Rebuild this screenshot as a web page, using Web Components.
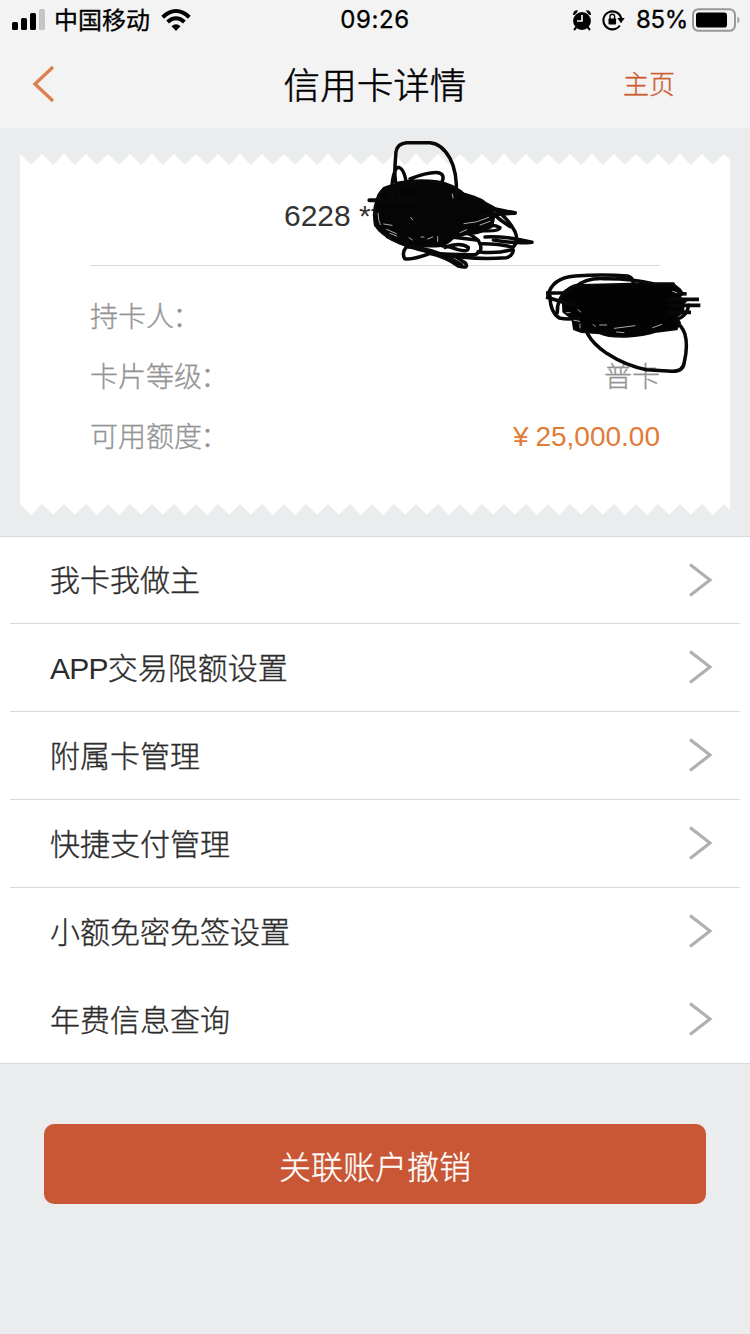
<!DOCTYPE html>
<html lang="zh-CN">
<head>
<meta charset="utf-8">
<title>信用卡详情</title>
<style>
html,body{margin:0;height:100%}
body{background:#ebeced;font-family:"Liberation Sans","Noto Sans CJK SC",sans-serif;color:#333;overflow:hidden}
</style>
</head>
<body>
<card-detail-page></card-detail-page>
<script>
function define(name, html) {
  const t = document.createElement('template');
  t.innerHTML = html;
  customElements.define(name, class extends HTMLElement {
    constructor() {
      super();
      this.attachShadow({ mode: 'open' }).append(t.content.cloneNode(true));
    }
  });
}

define('status-bar', `
<style>
:host{display:grid;grid-template-columns:1fr auto 1fr;align-items:center;height:40px;font:400 24px/40px Inter,"Noto Sans CJK SC",sans-serif;color:#000}
.l,.r{display:flex;align-items:center;height:40px}
.l{padding-left:12px}
.r{justify-content:flex-end;padding-right:10px}
svg{display:block;flex:none}
.time{letter-spacing:.6px;-webkit-text-stroke:.3px}
.carrier{margin:0 11px 0 9px;line-height:38px;-webkit-text-stroke:.3px;padding-top:2px}
.pct{margin:0 4px 0 11px;letter-spacing:-.3px;-webkit-text-stroke:.3px}
</style>
<div class="l">
<svg width="33" height="22" viewBox="0 0 33 22"><rect y="13" width="6" height="8" rx="1.6"/><rect x="9" y="9" width="6" height="12" rx="1.6"/><rect x="18" y="4" width="6" height="17" rx="1.6"/><rect x="27" width="6" height="21" rx="1.6" fill="#c5c5c5"/></svg>
<span class="carrier">中国移动</span>
<svg width="30" height="22" viewBox="0 0 30 22"><g fill="none" stroke="#000" stroke-width="4"><path d="M1.7 8.2Q8 2 15 2T28.300 8.200"/><path d="M6.600 13Q10.500 9.300 15 9.300T23.400 13"/></g><path d="M10.500 17.300Q15 13.200 19.500 17.300L15 22Z"/></svg>
</div>
<span class="time">09:26</span>
<div class="r">
<svg width="20" height="22" viewBox="0 0 20 22"><circle cx="10" cy="12" r="8.900"/><path d="M1 6Q1 1 6 1.300L5 3.500 2.500 6ZM19 6Q19 1 14 1.300L15 3.500 17.500 6Z"/><path d="M4.500 18 2 21M15.500 18 18 21" stroke="#000" stroke-width="2"/><path d="M10 6V12H5" fill="none" stroke="#f3f3f3" stroke-width="1.700"/></svg>
<svg style="margin-left:10px" width="23" height="22" viewBox="0 0 23 22"><path d="M17.800 16.500A9 9 0 1 1 19.200 9.500" fill="none" stroke="#000" stroke-width="2.100"/><path d="M15.300 9H22.700L19 14.200Z"/><rect x="6.500" y="9.500" width="7.600" height="6" rx=".8"/><path d="M8 10V7.600a2.300 2.300 0 0 1 4.600 0V10" fill="none" stroke="#000" stroke-width="1.400"/></svg>
<span class="pct">85%</span>
<svg width="48" height="24" viewBox="0 0 48 24"><rect x="1" y="1.200" width="42" height="21.600" rx="5.500" fill="none" stroke="#999" stroke-width="2"/><rect x="4" y="4.500" width="31" height="15" rx="2.800"/><path d="M45.500 8.500q2 .8 2 3.500t-2 3.500z" fill="#999"/></svg>
</div>`);

define('nav-header', `
<style>
:host{display:grid;grid-template-columns:1fr auto 1fr;align-items:center;height:88px}
.back{margin-left:32px;display:block}
h1{margin:0;padding-top:5px;font-weight:300;font-size:36.600px;line-height:83px;color:#000;-webkit-text-stroke:.5px}
.home{justify-self:end;margin-right:75px;padding-bottom:3px;font-size:26px;font-weight:300;color:#cd5c30;-webkit-text-stroke:.3px}
</style>
<svg class="back" width="24" height="40" viewBox="0 0 24 40"><path d="M21 3 3 20 21 37" fill="none" stroke="#dc8050" stroke-width="3.400"/></svg>
<h1><slot></slot></h1>
<span class="home"><slot name="action"></slot></span>`);

define('zigzag-edge', `
<style>
:host{display:block;height:11px}
:host([bottom]) .top,:host(:not([bottom])) .bot{display:none}
svg{display:block}
</style>
<svg width="710" height="11"><defs>
<pattern id="a" width="22" height="11" patternUnits="userSpaceOnUse"><path d="M0 0 11 11 22 0V11H0Z" fill="#fff"/></pattern>
<pattern id="b" width="22" height="11" patternUnits="userSpaceOnUse"><path d="M0 0 11 11 22 0Z" fill="#fff"/></pattern></defs>
<rect class="top" width="710" height="11" fill="url(#a)"/><rect class="bot" width="710" height="11" fill="url(#b)"/></svg>`);

define('info-row', `
<style>
:host{display:flex;justify-content:space-between;align-items:center;height:60px;font-size:28px;font-weight:300;color:#949494;-webkit-text-stroke:.3px}
.k,.v{padding-bottom:2px}
.v{color:var(--value,#949494);-webkit-text-stroke:var(--stroke,.3px);padding-bottom:var(--drop,2px);padding-top:var(--rise,0)}
</style>
<span class="k"><slot></slot></span><span class="v"><slot name="value"></slot></span>`);

define('card-summary', `
<style>
:host{display:block;position:relative;margin:26px 20px 0;height:361px}
.body{background:#fff;height:339px;padding:0 70px;box-sizing:border-box}
.no{height:101px;box-sizing:border-box;border-bottom:1px solid #d9d9d9;padding-left:194px;line-height:101px;font-size:30px;color:#333}
.rows{padding-top:20px}
.ink{position:absolute;left:-20px;top:-154px;pointer-events:none}
</style>
<zigzag-edge></zigzag-edge>
<div class="body"><div class="no"><slot name="number"></slot></div><div class="rows"><slot></slot></div></div>
<zigzag-edge bottom></zigzag-edge>
<svg class="ink" width="750" height="540" fill="none" stroke="#080808" stroke-width="10.500" stroke-linecap="round" stroke-linejoin="round">
<g transform="translate(350 130) scale(.33333)">
<path fill="#050505" stroke-width="5" d="M84 195Q96 168 140 163L190 158Q240 151 290 165L345 198Q385 204 405 225L432 245Q435 270 425 292L405 300Q390 312 345 314L310 325Q285 350 260 350L185 350Q145 342 110 322L95 298 77 285Q70 235 84 195Z"/>
<path d="M136 150C132 118 137 85 138 65Q142 40 170 38L240 38Q275 40 300 85Q322 125 319 195"/>
<path d="M124 210Q125 115 146 112Q166 117 171 178M136 150Q142 185 150 215"/>
<path d="M180 147Q235 125 265 128Q288 133 274 160M145 160Q200 148 262 156Q315 165 345 198"/>
<path stroke-width="12" d="M58 211H210M390 225Q435 240 495 249M385 257Q440 250 495 249"/>
<path d="M77 285Q65 220 102 176Q145 158 200 172M330 190Q395 206 405 220Q465 248 495 305Q508 335 488 352Q450 340 390 341"/>
<path d="M428 250Q450 270 480 290"/>
<path d="M400 290Q430 280 450 293Q448 305 395 302M405 321Q440 318 495 326L546 337Q500 342 430 330"/>
<path d="M175 345Q153 365 164 386Q190 390 240 370M170 350Q210 350 240 370Q310 375 375 374Q405 362 384 330Q350 302 305 290"/>
<path d="M77 285C100 325 180 358 270 372Q370 391 470 383Q488 378 490 360M384 365Q440 373 488 358"/>
<path d="M240 370Q290 382 325 408Q360 418 345 398L310 376M180 350Q265 358 335 405"/>
<path d="M285 352Q330 335 355 352Q356 368 324 359Q300 349 275 347M310 322 380 330"/>
<path stroke="#fff" stroke-width="2" d="M101 282 126 286M110 298 139 311M177 323 187 330M213 321H222M233 327 248 321M263 320V334M416 262Q380 280 342 281M420 274 390 285M307 192 309 204M182 262 188 270M84 250Q85 274 91 284M330 308 350 299M120 310 140 318"/>
</g>
<g transform="translate(500 260) scale(.33333)">
<path fill="#030303" stroke-width="6" d="M187 100Q205 80 245 75L390 71 520 72 540 88 550 102 535 112 560 120 550 132 550 155 530 170 540 188 530 208 470 215Q430 228 380 230Q325 232 300 220L245 216 222 208 217 177 190 155Z"/>
<path d="M144 107Q155 54 225 48Q310 42 382 48Q405 54 398 78M230 80Q255 54 310 56Q395 55 462 72L520 72"/>
<path d="M150 107Q150 156 178 174Q205 180 235 174M172 158Q170 115 205 88Q220 75 245 74"/>
<path stroke-width="11" stroke-linecap="butt" d="M138 99H205M138 111 240 142M520 99 560 102M500 118 597 118M500 136 601 136M500 157 573 157"/>
<path d="M566 136Q562 165 535 177M262 220Q279 252 320 280Q380 319 440 329L515 334Q550 335 553 306Q565 255 554 220Q547 200 525 181"/>
<path stroke="#fff" stroke-width="2" d="M234 149 242 156M199 158H210M222 181 239 184M240 192V204M279 193 286 200M299 195H320M343 205 405 197M458 203 485 193M350 216 372 218M518 94 530 98"/>
</g></svg>`);

define('menu-item', `
<style>
:host{display:block;height:88px;padding:0 10px;box-sizing:border-box}
.in{display:flex;justify-content:space-between;align-items:center;height:100%;box-sizing:border-box;padding:0 27px 0 40px;border-bottom:1px solid var(--line,#d9d9d9);font-size:30px;font-weight:300;color:#2c2c2c}
span{padding-bottom:4px;-webkit-text-stroke:.35px}
svg{display:block;margin-bottom:1px}
</style>
<div class="in"><span><slot></slot></span><svg width="26" height="34" viewBox="0 0 26 34"><path d="M3 1.500 23 17 3 32.500" fill="none" stroke="#b0b0b0" stroke-width="3.200"/></svg></div>`);

define('menu-list', `
<style>
:host{display:block;margin-top:21px;background:#fff;border-top:1px solid #dadada;border-bottom:1px solid #dadada;height:528px;box-sizing:border-box}
::slotted(:first-child){height:87px}
::slotted(:nth-last-child(-n+2)){--line:transparent}
</style><slot></slot>`);

define('primary-button', `
<style>
:host{display:block;margin:60px 44px 0}
button{display:block;width:100%;height:80px;border:0;border-radius:10px;background:#c95735;color:#fff;font:300 32px/80px "Liberation Sans","Noto Sans CJK SC",sans-serif;padding:4px 0 0;-webkit-text-stroke:.3px}
</style><button><slot></slot></button>`);

define('card-detail-page', `
<style>
:host{display:block;height:1334px}
header{height:128px;background:#f3f3f3}
.amount{--value:#e07b38;--stroke:0;--drop:0;--rise:1px}
.latin{-webkit-text-stroke:0;letter-spacing:-.8px}
.yen{margin-right:-1px}
.colon{margin-left:-1.5px}
</style>
<header><status-bar></status-bar><nav-header>信用卡详情<span slot="action">主页</span></nav-header></header>
<card-summary><span slot="number">6228 ****</span>
<info-row>持卡人<span class="colon">：</span></info-row>
<info-row>卡片等级<span class="colon">：</span><span slot="value">普卡</span></info-row>
<info-row class="amount">可用额度<span class="colon">：</span><span slot="value"><span class="yen">¥</span> 25,000.00</span></info-row>
</card-summary>
<menu-list><menu-item>我卡我做主</menu-item><menu-item><span class="latin">APP</span>交易限额设置</menu-item><menu-item>附属卡管理</menu-item><menu-item>快捷支付管理</menu-item><menu-item>小额免密免签设置</menu-item><menu-item>年费信息查询</menu-item></menu-list>
<primary-button>关联账户撤销</primary-button>`);
</script>
</body>
</html>
